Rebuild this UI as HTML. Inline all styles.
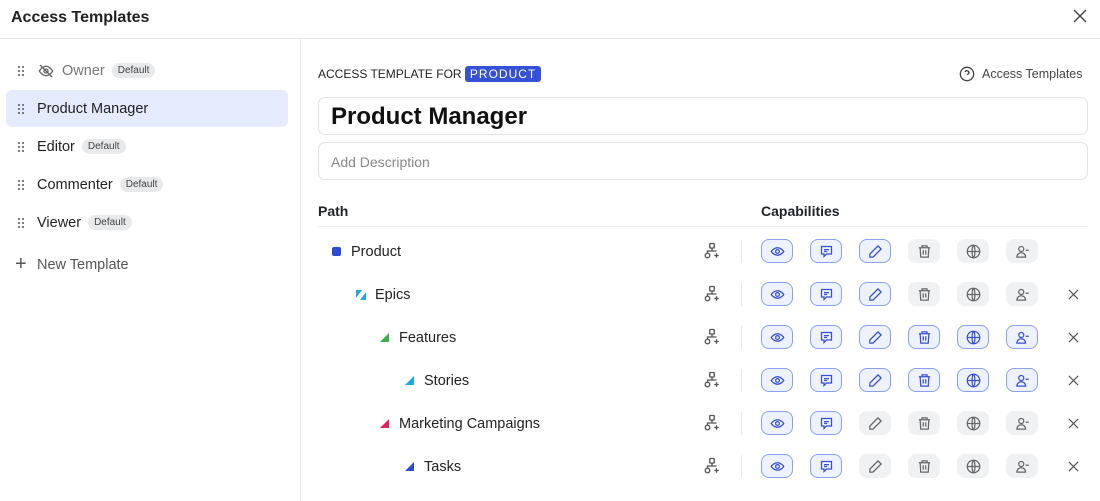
<!DOCTYPE html><html><head><style>
*{box-sizing:border-box;margin:0;padding:0}
body{width:1100px;height:501px;overflow:hidden;background:#fff;font-family:"Liberation Sans",sans-serif;color:#1f2328;position:relative}
.abs{position:absolute}
.hdr{left:0;top:0;width:1100px;height:39px;border-bottom:1px solid #e6e7ea}
.side{left:0;top:39px;width:301px;height:462px;border-right:1px solid #e6e7ea}
.item{position:absolute;left:6px;width:282px;height:37px;border-radius:6px;display:flex;align-items:center;padding-left:31px;font-size:14.5px;color:#222}
.grip{position:absolute;left:11px;top:13px;width:8px;height:12px;background:radial-gradient(circle,#777 1px,transparent 1.3px) 0 0/4px 4px}
.badge{font-size:10px;background:#e8e9eb;color:#444;border-radius:8px;padding:2px 6px;margin-left:7px}
.btn{position:absolute;width:32px;height:24px;border-radius:8px;display:flex;align-items:center;justify-content:center}
.on{background:#eef2ff;border:1.5px solid #8aa0f0;color:#3550d6}
.off{background:#f0f1f3;color:#666}
.row{position:absolute;left:318px;width:770px;height:43px}
.lbl{position:absolute;top:0;height:43px;display:flex;align-items:center;font-size:14.5px;color:#222}
</style></head><body>
<div class="abs hdr"><div class="abs" style="left:11px;top:9px;font-size:16px;font-weight:bold;color:#222">Access Templates</div>
<svg class="abs" style="left:1073px;top:9px" width="14" height="14" viewBox="0 0 14 14" stroke="#444" stroke-width="1.4"><path d="M1 1L13 13M13 1L1 13"/></svg></div>
<div class="abs side">
<div class="item" style="top:13px;color:#777"><div class="grip"></div><svg width="18" height="16" viewBox="0 0 24 24" fill="none" stroke="#666" stroke-width="2" style="margin-right:7px"><path d="M2 12s4-7 10-7 10 7 10 7-4 7-10 7S2 12 2 12z"/><circle cx="12" cy="12" r="3"/><path d="M3 3l18 18"/></svg>Owner<span class="badge">Default</span></div>
<div class="item" style="top:51px;background:#e5ebfd"><div class="grip"></div>Product Manager</div>
<div class="item" style="top:89px"><div class="grip"></div>Editor<span class="badge">Default</span></div>
<div class="item" style="top:127px"><div class="grip"></div>Commenter<span class="badge">Default</span></div>
<div class="item" style="top:165px"><div class="grip"></div>Viewer<span class="badge">Default</span></div>
<div class="item" style="top:207px;color:#555;padding-left:31px"><span class="abs" style="left:9px;top:7px;font-size:20px;color:#555">+</span>New Template</div>
</div>
<div class="abs" style="left:318px;top:67px;font-size:12px;color:#222">ACCESS TEMPLATE FOR <span style="background:#3552d6;color:#fff;border-radius:3px;padding:1px 5px;letter-spacing:1px">PRODUCT</span></div>
<div class="abs" style="left:959px;top:66px;font-size:12.5px;color:#444;display:flex;align-items:center"><svg width="16" height="16" viewBox="0 0 24 24" fill="none" stroke="#444" stroke-width="2" style="margin-right:7px"><circle cx="12" cy="12" r="10"/><path d="M9.1 9a3 3 0 015.8 1c0 2-3 3-3 3"/><path d="M12 17h.01"/></svg>Access Templates</div>
<div class="abs" style="left:318px;top:97px;width:770px;height:38px;border:1px solid #e1e3e6;border-radius:7px;font-size:24px;font-weight:bold;padding:5px 12px;color:#111">Product Manager</div>
<div class="abs" style="left:318px;top:142px;width:770px;height:38px;border:1px solid #e1e3e6;border-radius:7px;font-size:14px;padding:11px 12px;color:#888">Add Description</div>
<div class="abs" style="left:318px;top:203px;font-size:14px;font-weight:bold">Path</div>
<div class="abs" style="left:761px;top:203px;font-size:14px;font-weight:bold">Capabilities</div>
<div class="abs" style="left:318px;top:226px;width:770px;height:1px;background:#eceef0"></div>
<svg width="0" height="0" style="position:absolute"><defs>
<g id="eye" fill="none" stroke="currentColor" stroke-width="2"><path d="M2 12s4-6 10-6 10 6 10 6-4 6-10 6S2 12 2 12z"/><circle cx="12" cy="12" r="3"/></g>
<g id="cm" fill="none" stroke="currentColor" stroke-width="2"><path d="M4 4h16v12h-8l-4 4v-4H4z"/><path d="M8 9h8M8 12h5"/></g>
<g id="ed" fill="none" stroke="currentColor" stroke-width="2"><path d="M16 3l5 5L8 21H3v-5z"/></g>
<g id="tr" fill="none" stroke="currentColor" stroke-width="2"><path d="M3 6h18M8 6V3h8v3M5 6l1 15h12l1-15M10 10v7M14 10v7"/></g>
<g id="gl" fill="none" stroke="currentColor" stroke-width="2"><circle cx="12" cy="12" r="10"/><path d="M2 12h20M12 2c3 3 3 17 0 20M12 2c-3 3-3 17 0 20"/></g>
<g id="us" fill="none" stroke="currentColor" stroke-width="2"><circle cx="10" cy="8" r="4"/><path d="M3 21c0-4 3-7 7-7s7 3 7 7zM17 10h5"/></g>
<g id="nw" fill="none" stroke="#555" stroke-width="1.8"><rect x="9" y="2" width="6" height="6" rx="1"/><circle cx="6" cy="18" r="3"/><path d="M12 8v4H6v3M12 12h6M18 15v6M15 18h6"/></g>
</defs></svg>
<div id="rows"></div>
<script>
var rows=[["Product",14,"sq","#2f4bd1",[1,1,1,0,0,0],0],["Epics",38,"ep","#1fa8dd",[1,1,1,0,0,0],1],["Features",62,"tri","#3fae4f",[1,1,1,1,1,1],1],["Stories",87,"tri","#1fa8dd",[1,1,1,1,1,1],1],["Marketing Campaigns",62,"tri","#e2235a",[1,1,0,0,0,0],1],["Tasks",87,"tri","#2f4bd1",[1,1,0,0,0,0],1]];
var ic=["eye","cm","ed","tr","gl","us"],h="";
rows.forEach(function(r,i){var t=230+i*43;h+='<div class="row" style="top:'+t+'px">';
var shape=r[2]=="sq"?'<span style="display:inline-block;width:9px;height:9px;border-radius:2px;background:'+r[3]+';margin-right:10px"></span>':r[2]=="ep"?'<svg width="10" height="10" style="margin-right:9px"><path d="M0 0h6L0 8zM10 2v8H4z" fill="'+r[3]+'"/></svg>':'<svg width="10" height="9" style="margin-right:9px"><path d="M9 0v9H0z" fill="'+r[3]+'"/></svg>';
h+='<div class="lbl" style="left:'+r[1]+'px">'+shape+r[0]+'</div>';
h+='<svg class="abs" style="left:385px;top:12px" width="18" height="18" viewBox="0 0 24 24"><use href="#nw"/></svg>';
h+='<div class="abs" style="left:423px;top:10px;width:1px;height:23px;background:#e6e7ea"></div>';
ic.forEach(function(n,j){h+='<div class="btn '+(r[4][j]?'on':'off')+'" style="left:'+(443+j*49)+'px;top:9px"><svg width="15" height="15" viewBox="0 0 24 24"><use href="#'+n+'"/></svg></div>';});
if(r[5])h+='<svg class="abs" style="left:750px;top:16px" width="11" height="11" viewBox="0 0 12 12" stroke="#555" stroke-width="1.3"><path d="M1 1L11 11M11 1L1 11"/></svg>';
h+='</div>';});
document.getElementById("rows").innerHTML=h;
</script>
</body></html>
